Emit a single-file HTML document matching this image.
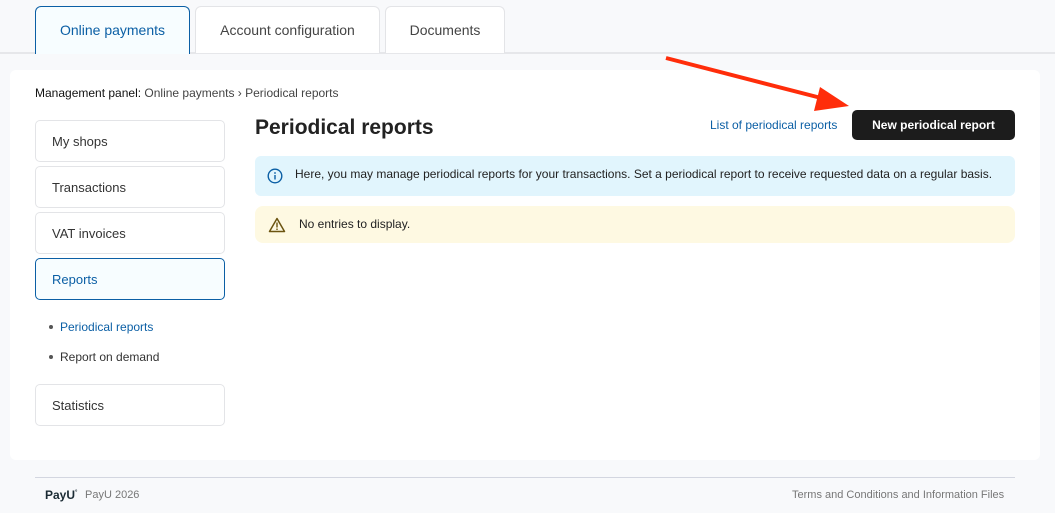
<!DOCTYPE html>
<html><head><style>
*{box-sizing:border-box;margin:0;padding:0}
body{width:1055px;height:513px;background:#f8f9fb;font-family:"Liberation Sans",Arial,sans-serif;position:relative;overflow:hidden;color:#222}
.tabline{position:absolute;left:0;top:52px;width:1055px;height:2px;background:#e6e7ea}
.tab{position:absolute;top:6px;height:47px;background:#fff;border:1px solid #e3e4e7;border-bottom:none;border-radius:6px 6px 0 0;font-size:14px;color:#444;text-align:center;line-height:46px}
.tab.act{border:1px solid #0b5fa5;border-bottom:none;background:#f7fdff;color:#0b5fa5;height:48px;z-index:2}
.card{position:absolute;left:10px;top:70px;width:1030px;height:390px;background:#fff;border-radius:6px}
.bc{position:absolute;left:35px;top:86px;font-size:12px;color:#444}
.bc b{font-weight:normal;color:#111}
.nav{position:absolute;left:35px;width:190px;height:42px;border:1px solid #e3e4e7;border-radius:5px;font-size:13px;color:#333;padding-left:16px;line-height:42px;background:#fff}
.nav.act{border-color:#0b5fa5;background:#f7fdff;color:#0b5fa5}
.sub{position:absolute;left:49px;font-size:12px;color:#333}
.sub:before{content:"";display:inline-block;width:4px;height:4px;border-radius:50%;background:#555;margin-right:7px;vertical-align:middle;position:relative;top:-1px}
h1{position:absolute;left:255px;top:116px;font-size:21px;font-weight:bold;color:#222}
.link{position:absolute;left:710px;top:118px;font-size:12px;color:#0b5fa5}
.btn{position:absolute;left:852px;top:110px;width:163px;height:30px;background:#1c1c1c;color:#fff;border-radius:5px;font-size:12px;font-weight:bold;text-align:center;line-height:30px}
.info{position:absolute;left:255px;top:156px;width:760px;height:40px;background:#e1f5fd;border-radius:6px;font-size:12px;color:#222;padding-left:40px;line-height:37px}
.warn{position:absolute;left:255px;top:206px;width:760px;height:37px;background:#fef9e2;border-radius:8px;font-size:12px;color:#222;padding-left:44px;line-height:37px}
.fline{position:absolute;left:35px;top:477px;width:980px;height:1px;background:#d3d6e0}
.foot{position:absolute;top:489px;font-size:11px;color:#777}
</style></head><body>
<div class="tabline"></div>
<div class="tab act" style="left:35px;width:155px">Online payments</div>
<div class="tab" style="left:195px;width:185px">Account configuration</div>
<div class="tab" style="left:385px;width:120px">Documents</div>
<div class="card"></div>
<div class="bc"><b>Management panel:</b> Online payments › Periodical reports</div>
<div class="nav" style="top:120px">My shops</div>
<div class="nav" style="top:166px">Transactions</div>
<div class="nav" style="top:212px">VAT invoices</div>
<div class="nav act" style="top:258px">Reports</div>
<div class="sub" style="top:320px;color:#0b5fa5">Periodical reports</div>
<div class="sub" style="top:350px">Report on demand</div>
<div class="nav" style="top:384px">Statistics</div>
<h1>Periodical reports</h1>
<div class="link">List of periodical reports</div>
<div class="btn">New periodical report</div>
<div class="info">Here, you may manage periodical reports for your transactions. Set a periodical report to receive requested data on a regular basis.
<svg style="position:absolute;left:12px;top:12px" width="16" height="16" viewBox="0 0 16 16"><circle cx="8" cy="8" r="6.8" fill="none" stroke="#0b5fa5" stroke-width="1.4"/><rect x="7.3" y="7" width="1.4" height="4.5" fill="#0b5fa5"/><circle cx="8" cy="5" r="0.9" fill="#0b5fa5"/></svg></div>
<div class="warn">No entries to display.
<svg style="position:absolute;left:13px;top:11px" width="18" height="16" viewBox="0 0 18 16"><path d="M9 1.5L16.5 14.5H1.5Z" fill="none" stroke="#6b5410" stroke-width="1.5" stroke-linejoin="round"/><rect x="8.3" y="5.5" width="1.4" height="5" fill="#6b5410"/><circle cx="9" cy="12.2" r="0.8" fill="#6b5410"/></svg></div>
<svg style="position:absolute;left:0;top:0" width="1055" height="513"><line x1="666" y1="58" x2="825" y2="99" stroke="#ff2d0a" stroke-width="4"/><path d="M849 106 L820 87 L814 111 Z" fill="#ff2d0a"/></svg>
<div class="fline"></div>
<div class="foot" style="left:45px;color:#1a2a33;font-size:12px;font-weight:bold;top:488px">PayU<sup style="font-size:6px">°</sup></div>
<div class="foot" style="left:85px">PayU 2026</div>
<div class="foot" style="left:792px">Terms and Conditions and Information Files</div>
</body></html>
